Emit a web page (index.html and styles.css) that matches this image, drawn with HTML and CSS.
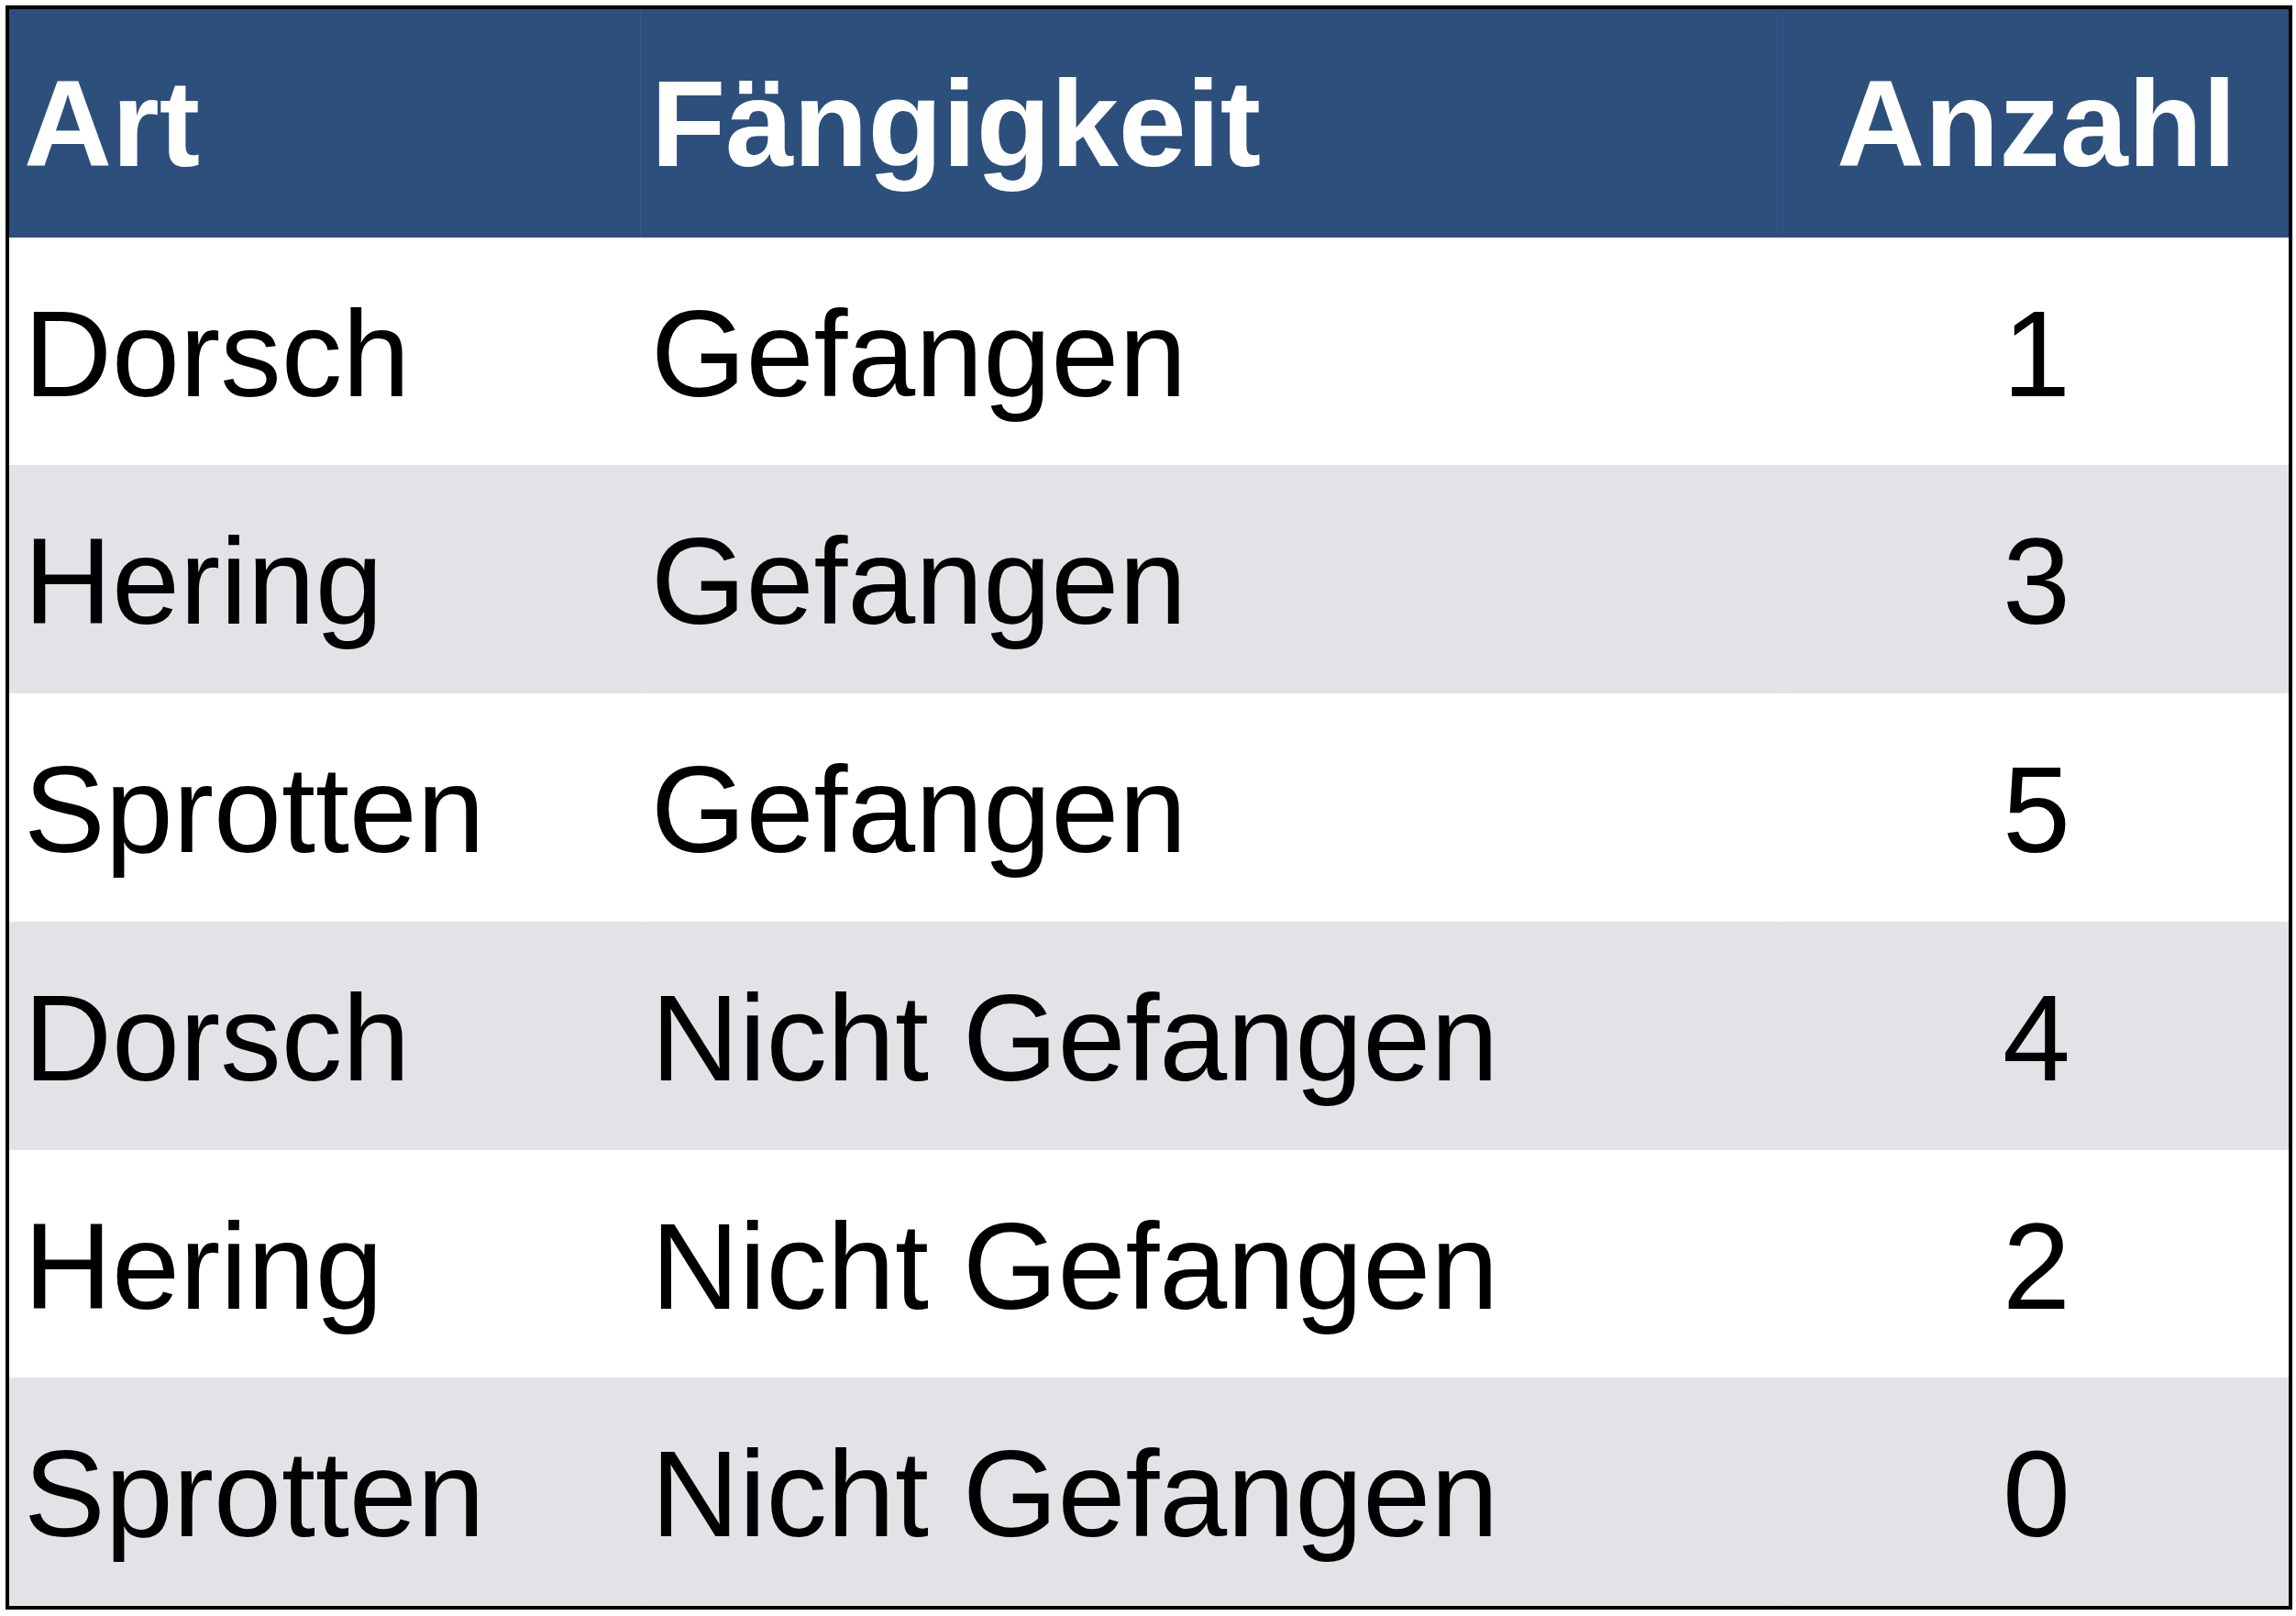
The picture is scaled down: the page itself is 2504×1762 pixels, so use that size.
FILE: index.html
```html
<!DOCTYPE html>
<html lang="de">
<head>
<meta charset="utf-8">
<title>Fängigkeit</title>
<link rel="stylesheet" href="styles.css">
</head>
<body>
<div class="table">
  <div class="row head">
    <div class="cell c1">Art</div>
    <div class="cell c2">Fängigkeit</div>
    <div class="cell c3">Anzahl</div>
  </div>
  <div class="row">
    <div class="cell c1">Dorsch</div>
    <div class="cell c2">Gefangen</div>
    <div class="cell c3">1</div>
  </div>
  <div class="row alt">
    <div class="cell c1">Hering</div>
    <div class="cell c2">Gefangen</div>
    <div class="cell c3">3</div>
  </div>
  <div class="row">
    <div class="cell c1">Sprotten</div>
    <div class="cell c2">Gefangen</div>
    <div class="cell c3">5</div>
  </div>
  <div class="row alt">
    <div class="cell c1">Dorsch</div>
    <div class="cell c2">Nicht Gefangen</div>
    <div class="cell c3">4</div>
  </div>
  <div class="row">
    <div class="cell c1">Hering</div>
    <div class="cell c2">Nicht Gefangen</div>
    <div class="cell c3">2</div>
  </div>
  <div class="row alt">
    <div class="cell c1">Sprotten</div>
    <div class="cell c2">Nicht Gefangen</div>
    <div class="cell c3">0</div>
  </div>
</div>
</body>
</html>
```
FILE: styles.css
```css
html, body {
  margin: 0;
  padding: 0;
  background: #ffffff;
}
body {
  padding: 6px 0 0 6px;
  font-family: "Liberation Sans", Arial, Helvetica, sans-serif;
}
.table {
  width: 2494px;
  height: 1749px;
  box-sizing: border-box;
  border: 4px solid #000000;
  display: grid;
  grid-template-rows: repeat(7, 1fr);
  box-shadow: 0 -1px 0 #c8c8c8;
}
.row {
  display: grid;
  grid-template-columns: 688px 1247px 551px;
  background: #ffffff;
  color: #000000;
}
.row.alt {
  background: #e2e3e7;
}
.row.head {
  background: #2d4f7c;
  color: #ffffff;
  font-weight: bold;
}
.cell {
  font-size: 133px;
  line-height: 133px;
  padding-top: 61px;
  white-space: nowrap;
  box-sizing: border-box;
}
.row.head .cell {
  padding-top: 59px;
}
.c1 {
  padding-left: 16px;
}
.c2 {
  padding-left: 11px;
  border-left: 1px solid transparent;
}
.c3 {
  text-align: center;
  border-left: 1px solid transparent;
}
.row.head .c2, .row.head .c3 {
  border-left-color: #35578a;
}
.row.alt .c2, .row.alt .c3 {
  border-left-color: #e6e7eb;
}
```
